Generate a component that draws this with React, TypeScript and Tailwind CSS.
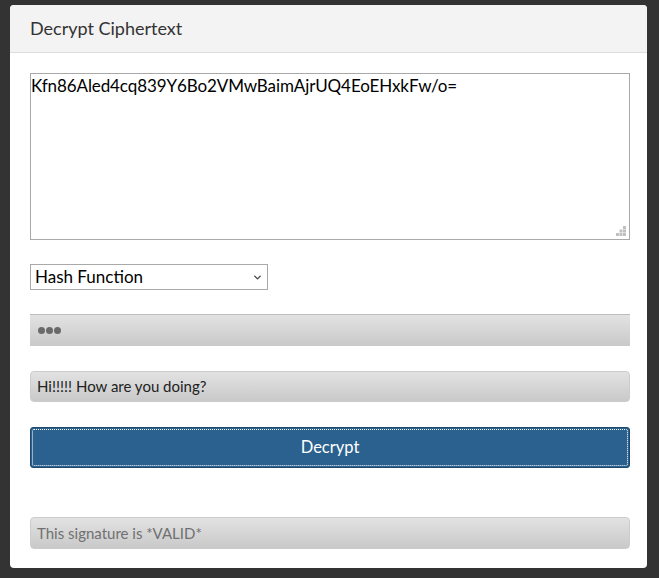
import { ChevronDown } from "lucide-react";

const fieldGradient = "bg-gradient-to-b from-[#e2e2e2] to-[#c9c9c9]";

const App = () => {
  return (
    <div className="h-[578px] w-[659px] bg-[#333333] pt-[5px] pl-[10px] font-['Lato','Open_Sans',sans-serif]">
      <div className="w-[637px] h-[563px] rounded-[4px] bg-white overflow-hidden">
        <div className="h-[48px] bg-[#f3f3f3] border-b border-[#dddddd] flex items-center pl-[20px]">
          <h1 className="text-[18px] text-[#333333]">Decrypt Ciphertext</h1>
        </div>

        <div className="pl-[20px] pr-[17px] pt-[20px]">
          <div className="relative h-[167px] border border-[#a9a9a9] bg-white pt-[1px]">
            <p className="text-[17px] text-black leading-[22px] tracking-[-0.1px]">Kfn86Aled4cq839Y6Bo2VMwBaimAjrUQ4EoEHxkFw/o=</p>
            {/* resize grip */}
            <svg className="absolute right-[3px] bottom-[3px]" width="10" height="10" viewBox="0 0 10 10">
              <rect x="7" y="0" width="3" height="3" fill="#c0c0c0" />
              <rect x="3.5" y="3.5" width="3" height="3" fill="#c0c0c0" />
              <rect x="7" y="3.5" width="3" height="3" fill="#c0c0c0" />
              <rect x="0" y="7" width="3" height="3" fill="#c0c0c0" />
              <rect x="3.5" y="7" width="3" height="3" fill="#c0c0c0" />
              <rect x="7" y="7" width="3" height="3" fill="#c0c0c0" />
            </svg>
          </div>

          <div className="mt-[24px] w-[238px] h-[26px] border border-[#a9a9a9] flex items-center justify-between pl-[4px] pr-[4px]">
            <span className="text-[17px] text-black">Hash Function</span>
            <ChevronDown className="w-[11px] h-[11px] text-[#444444]" strokeWidth={3} />
          </div>

          <div className={`mt-[24px] h-[32px] ${fieldGradient} border-t border-[#bdbdbd] flex items-center pl-[8px] gap-[1px]`}>
            <span className="w-[7px] h-[7px] rounded-full bg-[#6a6a6a]" />
            <span className="w-[7px] h-[7px] rounded-full bg-[#6a6a6a]" />
            <span className="w-[7px] h-[7px] rounded-full bg-[#6a6a6a]" />
          </div>

          <div className={`mt-[25px] h-[31px] rounded-[4px] ${fieldGradient} border border-[#cccccc] flex items-center pl-[6px]`}>
            <span className="text-[15px] text-[#222222]">Hi!!!!! How are you doing?</span>
          </div>

          <button className="mt-[25px] w-full h-[41px] rounded-[3px] bg-[#2b618f] border border-[#1f4a6e] p-[1px]">
            <div className="w-full h-full border border-dotted border-white rounded-[2px] flex items-center justify-center">
              <span className="text-[16.5px] text-white">Decrypt</span>
            </div>
          </button>

          <div className={`mt-[49px] h-[32px] rounded-[4px] ${fieldGradient} border border-[#cccccc] flex items-center pl-[6px]`}>
            <span className="text-[15px] text-[#707070]">This signature is *VALID*</span>
          </div>
        </div>
      </div>
    </div>
  );
};

export default App;
